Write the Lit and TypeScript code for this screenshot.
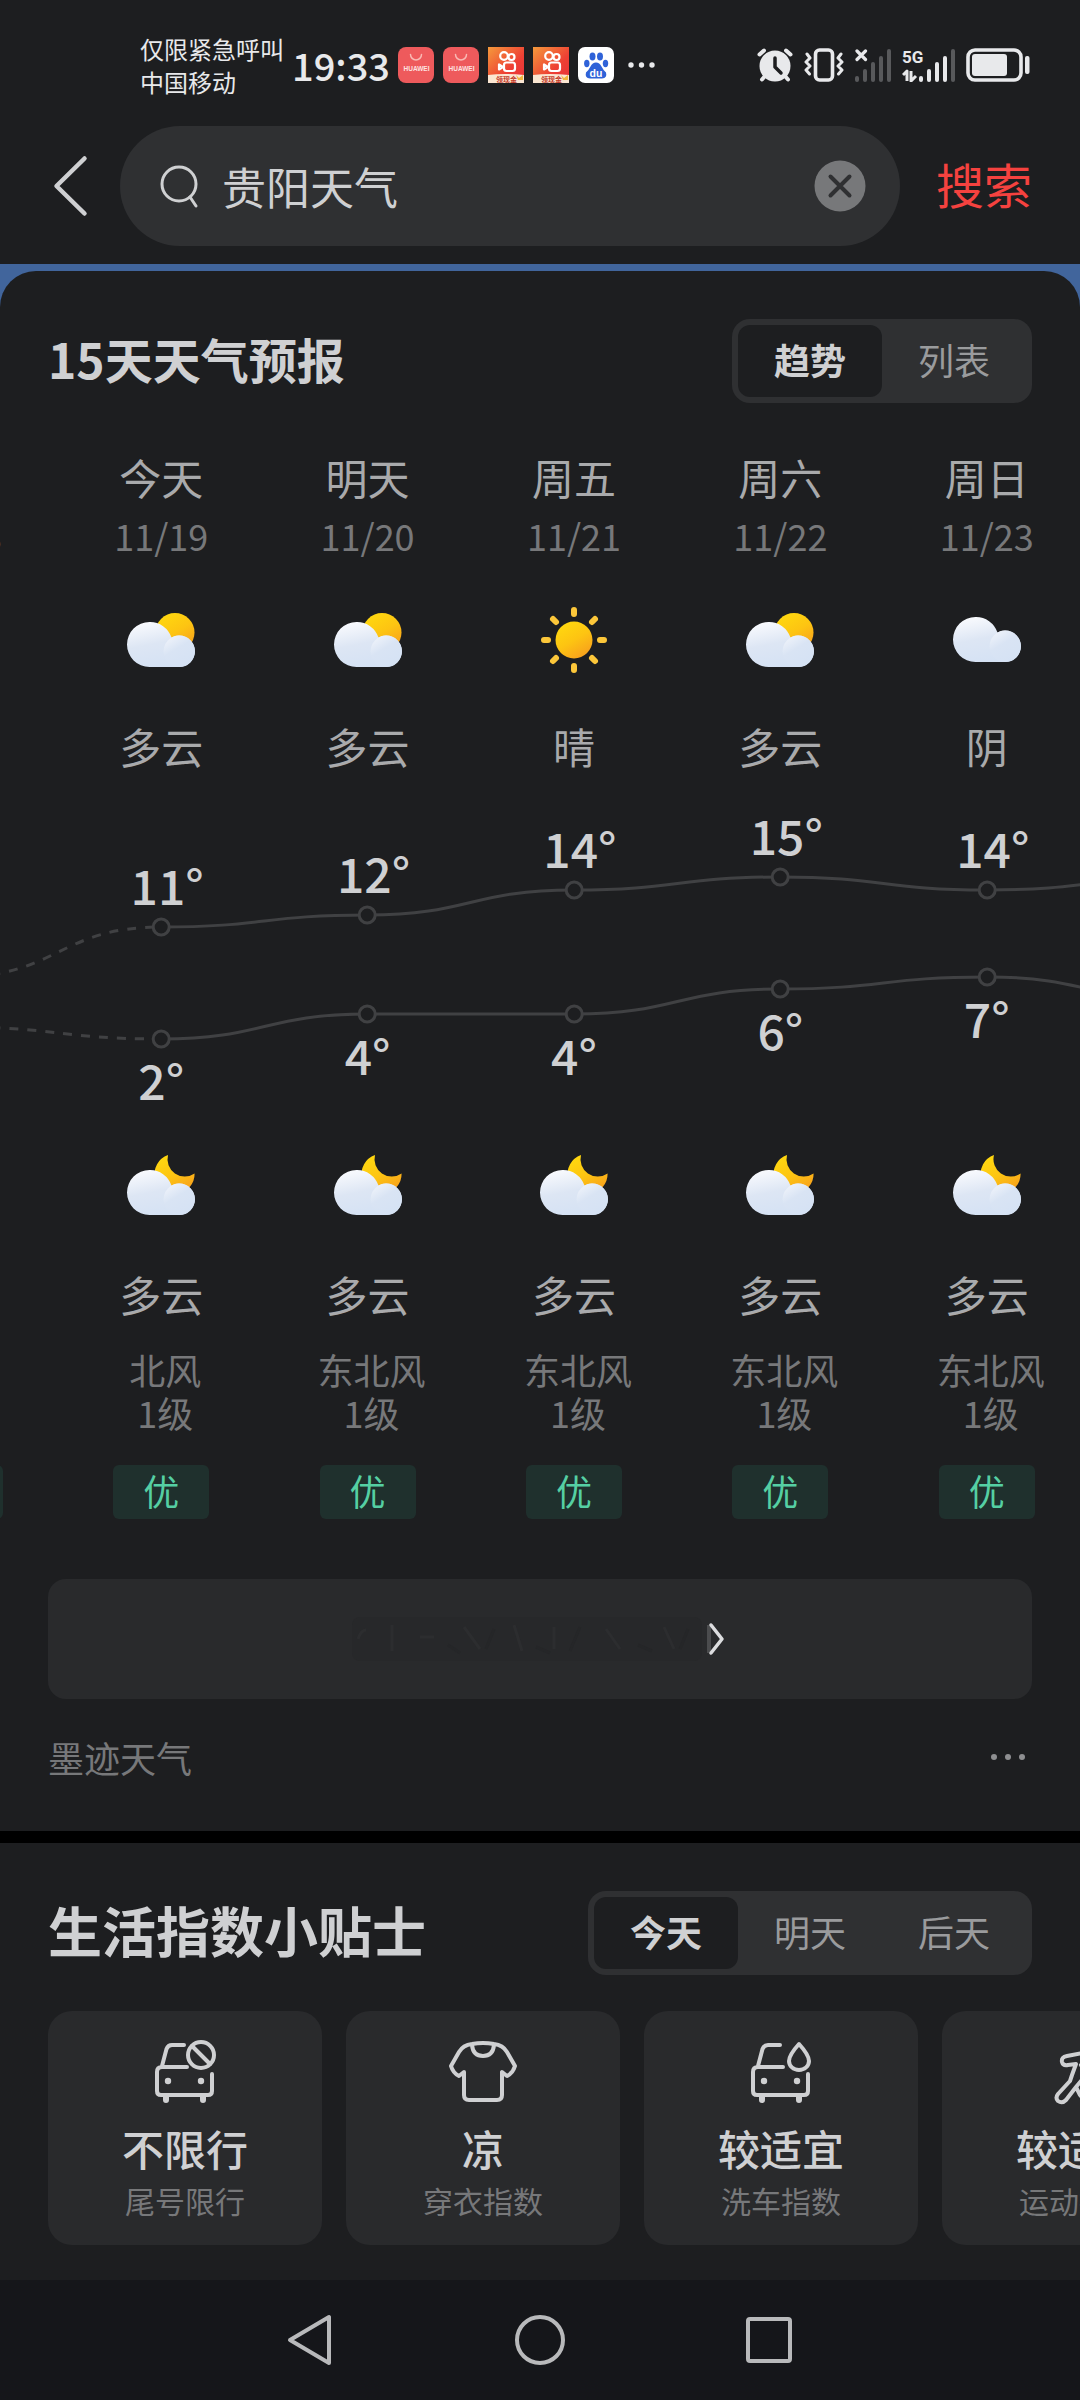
import { LitElement, html, svg, css, nothing } from "lit";
import { customElement, state } from "lit/decorators.js";
import { classMap } from "lit/directives/class-map.js";

type Sky = "partly" | "sunny" | "cloudy" | "night";

interface Day {
  name: string;
  date: string;
  sky?: Sky;
  text?: string;
  high: number;
  low: number;
  wind?: string;
  past?: boolean;
}

const DAYS: Day[] = [
  { name: "", date: "11/18", high: 7, low: 3, past: true },
  { name: "今天", date: "11/19", sky: "partly", text: "多云", high: 11, low: 2, wind: "北风" },
  { name: "明天", date: "11/20", sky: "partly", text: "多云", high: 12, low: 4, wind: "东北风" },
  { name: "周五", date: "11/21", sky: "sunny", text: "晴", high: 14, low: 4, wind: "东北风" },
  { name: "周六", date: "11/22", sky: "partly", text: "多云", high: 15, low: 6, wind: "东北风" },
  { name: "周日", date: "11/23", sky: "cloudy", text: "阴", high: 14, low: 7, wind: "东北风" },
];

/* Temperatures that the curves run towards after the last listed day. */
const AFTER = { high: 15, low: 5 };

const yOf = (t: number) => Math.round(288 - 12.44 * t);

const cloud = svg`
  <path fill="url(#cloud-big)" d="M24.5 18A22.500 22.500 0 0 0 24.500 63H54.300A15.700 15.700 0 1 0 46.500 33.600A22.500 22.500 0 0 0 24.500 18Z"/>
  <circle cx="54.300" cy="47.300" r="15.700" fill="url(#cloud-small)"/>`;

const SKY = {
  partly: svg`<circle cx="50" cy="28.500" r="19.500" fill="url(#sun)"/>${cloud}`,
  cloudy: svg`<g transform="translate(0 -5)">${cloud}</g>`,
  night: svg`<path fill="url(#sun)" d="M43 3A20 20 0 1 0 69.600 21.500A17.300 17.300 0 0 1 43 3Z"/>${cloud}`,
  sunny: svg`
    <circle cx="36" cy="36" r="18.500" fill="url(#sun)"/>
    <path fill="none" stroke="#fcc73a" stroke-width="6" stroke-linecap="round"
      d="M36 6v4M36 62v4M6 36h4M62 36h4M15 15l3 3M54 54l3 3M15 57l3-3M54 18l3-3"/>`,
};

const carBody = svg`
  <path d="M35 10H23Q19 10 17.500 14L13 31M38 32H13Q8 32 8 37V56Q8 60 12 60H59Q63 60 63 56V39"/>
  <path d="M17 61v4M54 61v4" stroke-width="6"/>
  <circle cx="19" cy="46" r="3.200" fill="currentColor" stroke="none"/>
  <circle cx="52" cy="46" r="3.200" fill="currentColor" stroke="none"/>`;

const TIPS = [
  {
    value: "不限行",
    label: "尾号限行",
    icon: svg`${carBody}<circle cx="52" cy="20" r="13"/><path d="M43 11l18 18"/>`,
  },
  {
    value: "凉",
    label: "穿衣指数",
    icon: svg`<path d="M25 9Q36 7 47 9Q56 10 60 17L68 31Q66 38 60 41L55 37V60Q55 65 50 65H22Q17 65 17 60V37L12 41Q6 38 4 31L12 17Q16 10 25 9Z"/><path d="M25 10Q26 21 36 21Q46 21 47 10"/>`,
  },
  {
    value: "较适宜",
    label: "洗车指数",
    icon: svg`${carBody}<path d="M54 9Q64 20 64 26A10 9 0 0 1 44 26Q44 20 54 9Z"/>`,
  },
  {
    value: "较适宜",
    label: "运动指数",
    icon: svg`<path d="M40 18L24 21Q18 22 19 27Q20 31 25 30L33 29L29 40L27 46L15 59Q12 63 15 66Q19 69 23 65L33 52L38 46M33 52L37 60L42 66M38 30L44 40L56 36"/><circle cx="48" cy="14" r="6"/>`,
  },
];

@customElement("app-root")
export class AppRoot extends LitElement {
  @state() private view = "趋势";
  @state() private tipDay = "今天";

  static styles = css`
    :host {
      display: block;
      background: #1d1e20;
      color: #cfd0d2;
      font-family: "Noto Sans CJK SC", sans-serif;
      font-size: 36px;
    }
    * { box-sizing: border-box; }
    h2, p, ul { margin: 0; padding: 0; }
    ul { list-style: none; }
    svg { display: block; flex: none; }
    button {
      border: 0;
      padding: 0;
      background: none;
      color: inherit;
      font: inherit;
    }
    .defs { position: absolute; }

    .status {
      display: flex;
      align-items: center;
      justify-content: space-between;
      padding: 32px 50px 28px 140px;
      color: #e8e9eb;
    }
    .status-left, .status-right { display: flex; align-items: center; }
    .carrier { font-size: 24px; line-height: 33px; white-space: nowrap; }
    .clock { margin: 0 8px; font-size: 38px; line-height: 60px; font-weight: 500; }
    .apps { display: flex; gap: 9px; }
    .apps-more { margin-left: 14px; }
    .status-right { gap: 11px; }

    .search { display: flex; align-items: center; padding: 0 48px 0 36px; margin-bottom: 18px; }
    .back { width: 84px; }
    .box {
      flex: 1;
      min-width: 0;
      display: flex;
      align-items: center;
      height: 120px;
      padding: 0 34px 0 40px;
      border-radius: 60px;
      background: #2f3032;
    }
    .query {
      flex: 1;
      min-width: 0;
      margin: 0 22px;
      padding: 0;
      border: 0;
      outline: 0;
      background: none;
      color: #cfd0d2;
      font: inherit;
      font-size: 44px;
      line-height: 60px;
    }
    .submit { margin-left: 36px; padding-bottom: 6px; color: #f5423f; font-size: 48px; line-height: 60px; }

    .sheet-back { background: #41659c; padding-top: 7px; }
    .sheet { background: #1d1e20; border-radius: 36px 36px 0 0; padding: 48px 0 44px; }
    .head { display: flex; align-items: center; justify-content: space-between; padding: 0 48px; }
    h2 { padding-bottom: 6px; font-size: 48px; line-height: 72px; font-weight: 700; white-space: nowrap; }
    .large { font-size: 54px; }
    .seg { display: flex; padding: 6px; border-radius: 18px; background: #2f3032; }
    .seg button {
      width: 144px;
      height: 72px;
      padding-bottom: 4px;
      border-radius: 12px;
      color: #9a9b9d;
      line-height: 54px;
    }
    .seg .on { background: #1d1e20; color: #cfd0d2; font-weight: 700; }

    .days { --col: calc((100% - 48px) / 5); display: flex; margin-top: 44px; overflow: hidden; }
    .day {
      flex: 0 0 var(--col);
      display: flex;
      flex-direction: column;
      align-items: center;
      text-align: center;
      color: #a9aaac;
    }
    .past { margin-left: calc(58px - var(--col)); }
    .name, .cond { min-height: 60px; font-size: 42px; line-height: 60px; }
    .date { color: #77787a; line-height: 56px; }
    .sky { width: 72px; height: 72px; margin: 41px 0 40px; }
    .night-sky { margin-top: 0; }
    .chart { position: relative; align-self: stretch; height: 376px; }
    .curve { width: 100%; height: 100%; overflow: visible; fill: none; stroke: #404143; stroke-width: 3; }
    .dot { fill: #1d1e20; }
    .temp {
      position: absolute;
      left: 0;
      right: 0;
      color: #cfd0d2;
      font-size: 48px;
      line-height: 48px;
      font-weight: 500;
    }
    .high { padding-left: 12px; }
    .wind { min-height: 86px; margin: 24px 0 31px; padding-left: 8px; color: #77787a; line-height: 43px; }
    .wind span { display: block; }
    .aqi {
      width: 96px;
      padding-bottom: 4px;
      border-radius: 6px;
      background: #1f302d;
      color: #55cfa3;
      line-height: 50px;
    }

    .more {
      display: flex;
      align-items: center;
      justify-content: center;
      width: calc(100% - 96px);
      height: 120px;
      margin: 60px 48px 28px;
      border-radius: 18px;
      background: #292a2c;
    }
    .source {
      display: flex;
      align-items: center;
      justify-content: space-between;
      padding: 0 54px 0 48px;
      color: #77787a;
      line-height: 60px;
    }

    .tips { border-top: 12px solid #000; padding: 48px 0 35px; }
    .cards { display: flex; gap: 24px; margin-top: 36px; padding-left: 48px; overflow: hidden; }
    .card {
      flex: 0 0 274px;
      display: flex;
      flex-direction: column;
      align-items: center;
      padding: 24px 0 25px;
      border-radius: 24px;
      background: #292a2c;
    }
    .card svg { fill: none; stroke: currentColor; stroke-width: 4; stroke-linecap: round; stroke-linejoin: round; }
    .value { margin: 13px 0 4px; font-size: 42px; line-height: 56px; font-weight: 500; white-space: nowrap; }
    .label { color: #77787a; font-size: 30px; line-height: 40px; white-space: nowrap; }

    .nav {
      display: flex;
      align-items: center;
      justify-content: center;
      gap: 170px;
      height: 120px;
      background: #15161a;
    }
  `;

  private segment(label: string, items: string[], current: string, pick: (v: string) => void) {
    return html`<div class="seg" role="group" aria-label=${label}>
      ${items.map(
        (v) => html`<button
          class=${classMap({ on: v === current })}
          aria-pressed=${v === current ? "true" : "false"}
          @click=${() => pick(v)}
        >${v}</button>`,
      )}
    </div>`;
  }

  private sky(kind: Sky | undefined, extra = "") {
    return html`<svg class="sky ${extra}" viewBox="0 0 72 72" aria-hidden="true">${kind ? SKY[kind] : nothing}</svg>`;
  }

  /* Each column draws its own points and the stretch of curve up to the next column. */
  private chart(d: Day, i: number) {
    const next = DAYS[i + 1] ?? AFTER;
    const line = (a: number, b: number) =>
      svg`<path stroke-dasharray=${d.past ? "9 9" : "none"} d="M103 ${yOf(a)}C206 ${yOf(a)} 206 ${yOf(b)} 309 ${yOf(b)}"/>`;
    return html`<div class="chart">
      <svg class="curve" viewBox="0 0 206 376" preserveAspectRatio="none" aria-hidden="true">
        ${line(d.high, next.high)}${line(d.low, next.low)}
        <circle class="dot" cx="103" cy=${yOf(d.high)} r="8"/>
        <circle class="dot" cx="103" cy=${yOf(d.low)} r="8"/>
      </svg>
      ${d.past
        ? nothing
        : html`<span class="temp high" style="top:${yOf(d.high) - 67}px">${d.high}°</span>
            <span class="temp" style="top:${yOf(d.low) + 16}px">${d.low}°</span>`}
    </div>`;
  }

  private day(d: Day, i: number) {
    return html`<li class=${classMap({ day: true, past: !!d.past })}>
      <p class="name">${d.name}</p>
      <p class="date">${d.date}</p>
      ${this.sky(d.sky)}
      <p class="cond">${d.text}</p>
      ${this.chart(d, i)}
      ${this.sky(d.past ? undefined : "night", "night-sky")}
      <p class="cond">${d.past ? nothing : "多云"}</p>
      <p class="wind">${d.wind ? html`<span>${d.wind}</span><span>1级</span>` : nothing}</p>
      <p class="aqi">优</p>
    </li>`;
  }

  private huawei() {
    return html`<svg width="36" height="36" viewBox="0 0 36 36" aria-hidden="true">
      <rect width="36" height="36" rx="8" fill="#ee5a5c"/>
      <path d="M12.500 7.500a5.500 5.500 0 0 0 11 0" fill="none" stroke="#f9b9b4" stroke-width="1.500" stroke-linecap="round"/>
      <text x="18.500" y="23.500" text-anchor="middle" font-family="Liberation Sans" font-weight="700" font-size="6.500" fill="#fde3e0">HUAWEI</text>
    </svg>`;
  }

  private kuaishou() {
    return html`<svg width="36" height="36" viewBox="0 0 36 36" aria-hidden="true">
      <rect width="36" height="36" fill="url(#ks)"/>
      <g fill="none" stroke="#fff" stroke-width="2.200" stroke-linejoin="round">
        <circle cx="16" cy="9" r="3.800"/><circle cx="23.500" cy="10" r="3"/>
        <rect x="16" y="15.500" width="11" height="8.500" rx="2.500"/>
        <path d="M11 17.500v5l4-2.500z"/>
      </g>
      <path d="M0 28q16-2 36 0v8H0z" fill="#fbe6d2"/>
      <path d="M28 28l3 3 4-3v5h-5z" fill="#f2b53c"/>
      <text x="18.500" y="35" text-anchor="middle" font-family="Noto Sans CJK SC" font-weight="700" font-size="7" fill="#c33a2a">领现金</text>
    </svg>`;
  }

  private statusBar() {
    const bars = (lit: number) =>
      [0, 1, 2, 3, 4].map((n) => {
        const h = [6, 13, 20, 26, 33][n];
        return svg`<rect x=${n * 8} y=${33 - h} width="4" height=${h} rx="2" fill=${n < lit ? "#e8e9eb" : "#58595b"}/>`;
      });
    return html`<header class="status">
      <div class="status-left">
        <div class="carrier">仅限紧急呼叫<br />中国移动</div>
        <div class="clock">19:33</div>
        <div class="apps">
          ${this.huawei()}${this.huawei()}${this.kuaishou()}${this.kuaishou()}
          <svg width="36" height="36" viewBox="0 0 36 36" aria-hidden="true">
            <rect width="36" height="36" rx="7" fill="#fff"/>
            <g fill="#2f62d8">
              <ellipse cx="14.500" cy="9.500" rx="3" ry="4"/><ellipse cx="22" cy="9.500" rx="3" ry="4"/>
              <ellipse cx="8.800" cy="16.500" rx="2.700" ry="3.700"/><ellipse cx="27.500" cy="16.500" rx="2.700" ry="3.700"/>
              <path d="M18 15.500q3.500 0 5.500 4t4.500 6q1.500 5.500-4 6h-12q-5.500-.5-4-6 2.500-2 4.500-6t5.500-4z"/>
            </g>
            <text x="18" y="30" text-anchor="middle" font-family="Liberation Sans" font-weight="700" font-size="10.500" fill="#fff">du</text>
          </svg>
        </div>
        <svg class="apps-more" width="27" height="6" viewBox="0 0 27 6" fill="#e8e9eb" aria-hidden="true">
          <circle cx="3" cy="3" r="2.700"/><circle cx="13.500" cy="3" r="2.700"/><circle cx="24" cy="3" r="2.700"/>
        </svg>
      </div>
      <div class="status-right">
        <svg width="36" height="34" viewBox="0 0 36 34" aria-hidden="true">
          <g stroke="#e8e9eb" stroke-width="4" stroke-linecap="round" fill="none">
            <path d="M2.500 6.500L7 2.500M33.500 6.500L29 2.500M8 28l-3 3.500M28 28l3 3.500"/>
          </g>
          <circle cx="18" cy="18" r="15.500" fill="#e8e9eb"/>
          <path d="M18 10v9l6 6" fill="none" stroke="#1d1e20" stroke-width="3.500" stroke-linecap="round" stroke-linejoin="round"/>
        </svg>
        <svg width="40" height="34" viewBox="0 0 40 34" fill="none" stroke="#e8e9eb" stroke-linecap="round" stroke-linejoin="round" aria-hidden="true">
          <rect x="11.500" y="2" width="17" height="30" rx="4" stroke-width="3.600"/>
          <path d="M3 6l3 4-4 4 4 4-4 4 3.500 4M37 6l-3 4 4 4-4 4 4 4-3.500 4" stroke-width="3"/>
        </svg>
        <svg width="36" height="33" viewBox="0 0 36 33" aria-hidden="true">
          ${bars(0)}
          <path d="M2 2l8.500 8.500M10.500 2L2 10.500" stroke="#e8e9eb" stroke-width="3.200" stroke-linecap="round"/>
        </svg>
        <svg width="53" height="33" viewBox="0 0 53 33" aria-hidden="true">
          <g transform="translate(17)">${bars(4)}</g>
          <text x="0" y="14" font-family="Roboto" font-weight="700" font-size="17" fill="#e8e9eb">5G</text>
          <path d="M1 26l4-4v10M9 22v10l5-5" fill="none" stroke="#e8e9eb" stroke-width="3" stroke-linejoin="round"/>
        </svg>
        <svg width="64" height="34" viewBox="0 0 64 34" aria-hidden="true">
          <rect x="2" y="2" width="53" height="30" rx="7" fill="none" stroke="#e8e9eb" stroke-width="3.600"/>
          <rect x="6" y="6" width="35" height="22" rx="3" fill="#e8e9eb"/>
          <rect x="59" y="8" width="4.500" height="18" rx="2" fill="#e8e9eb"/>
        </svg>
      </div>
    </header>`;
  }

  render() {
    return html`
      <svg class="defs" width="0" height="0" aria-hidden="true">
        <defs>
          <linearGradient id="sun" x1="0.2" y1="0" x2="0.8" y2="1">
            <stop offset="0" stop-color="#ffd90f"/><stop offset="0.5" stop-color="#fdc412"/><stop offset="1" stop-color="#f79c1e"/>
          </linearGradient>
          <linearGradient id="cloud-big" x1="0.2" y1="0" x2="0.5" y2="1">
            <stop offset="0" stop-color="#fafbfe"/><stop offset="0.5" stop-color="#dde6f4"/><stop offset="1" stop-color="#d5e2f4"/>
          </linearGradient>
          <linearGradient id="cloud-small" x1="0.1" y1="0" x2="0.7" y2="1">
            <stop offset="0" stop-color="#f2f5fb"/><stop offset="0.45" stop-color="#d9e4f4"/><stop offset="1" stop-color="#d5e2f4"/>
          </linearGradient>
          <linearGradient id="ks" x1="0" y1="0" x2="1" y2="1">
            <stop offset="0" stop-color="#f59a3c"/><stop offset="0.6" stop-color="#ee4034"/><stop offset="1" stop-color="#e8303a"/>
          </linearGradient>
        </defs>
      </svg>
      ${this.statusBar()}
      <form class="search" role="search" @submit=${(e: Event) => e.preventDefault()}>
        <button class="back" type="button" aria-label="返回">
          <svg width="60" height="66" viewBox="0 0 60 66" fill="none" stroke="#cfd0d2" stroke-width="4.500" stroke-linecap="round" stroke-linejoin="round">
            <path d="M48.500 5.500L20.500 33L48.500 60.500"/>
          </svg>
        </button>
        <div class="box">
          <svg width="40" height="44" viewBox="0 0 40 44" fill="none" stroke="#cfd0d2" stroke-width="3" stroke-linecap="round" aria-hidden="true">
            <circle cx="19" cy="20" r="17"/><path d="M30 33l6 9"/>
          </svg>
          <input class="query" type="text" aria-label="搜索" value="贵阳天气" />
          <button type="button" aria-label="清除">
            <svg width="52" height="52" viewBox="0 0 52 52">
              <circle cx="26" cy="26" r="25.500" fill="#77787a"/>
              <path d="M16.500 16.500l19 19M35.500 16.500l-19 19" stroke="#2f3032" stroke-width="4" stroke-linecap="round"/>
            </svg>
          </button>
        </div>
        <button class="submit" type="submit">搜索</button>
      </form>

      <div class="sheet-back">
        <section class="sheet">
          <div class="head">
            <h2>15天天气预报</h2>
            ${this.segment("预报视图", ["趋势", "列表"], this.view, (v) => (this.view = v))}
          </div>
          <ul class="days">${DAYS.map((d, i) => this.day(d, i))}</ul>
          <button class="more" aria-label="更多">
            <svg width="392" height="48" viewBox="0 0 392 48" fill="none">
              <rect x="8" y="2" width="350" height="44" rx="8" fill="#27282a"/>
              <path d="M14 24q3-9 8-9M48 10v26M76 22h14M120 12l16 22M170 10l8 26M210 12v22M262 14l14 20M320 12l10 22" stroke="#2c2d2f" stroke-width="3"/>
              <path d="M104 30l12 8M150 14l-8 20M192 32l14 6M236 12l-10 24M294 30l14 6M344 14l-8 20" stroke="#252628" stroke-width="3"/>
              <path d="M365 10v28" stroke="#4b4c4e" stroke-width="4"/>
              <path d="M367 10l11 14-11 14" stroke="#dcdddf" stroke-width="3.500" stroke-linecap="round" stroke-linejoin="round"/>
            </svg>
          </button>
          <div class="source">
            <span>墨迹天气</span>
            <button aria-label="更多选项">
              <svg width="36" height="8" viewBox="0 0 36 8" fill="#8e8f91">
                <circle cx="4" cy="4" r="3"/><circle cx="18" cy="4" r="3"/><circle cx="32" cy="4" r="3"/>
              </svg>
            </button>
          </div>
        </section>
      </div>

      <section class="tips">
        <div class="head">
          <h2 class="large">生活指数小贴士</h2>
          ${this.segment("日期", ["今天", "明天", "后天"], this.tipDay, (v) => (this.tipDay = v))}
        </div>
        <ul class="cards">
          ${TIPS.map(
            (t) => html`<li class="card">
              <svg width="72" height="72" viewBox="0 0 72 72" aria-hidden="true">${t.icon}</svg>
              <p class="value">${t.value}</p>
              <p class="label">${t.label}</p>
            </li>`,
          )}
        </ul>
      </section>

      <nav class="nav">
        <button aria-label="后退">
          <svg width="60" height="60" viewBox="0 0 60 60" fill="none" stroke="#b8b9bb" stroke-width="4" stroke-linejoin="round"><path d="M49 7v46L10 30z"/></svg>
        </button>
        <button aria-label="主页">
          <svg width="60" height="60" viewBox="0 0 60 60" fill="none" stroke="#b8b9bb" stroke-width="4"><circle cx="30" cy="30" r="23"/></svg>
        </button>
        <button aria-label="最近任务">
          <svg width="60" height="60" viewBox="0 0 60 60" fill="none" stroke="#b8b9bb" stroke-width="4"><rect x="8" y="9" width="42" height="42" rx="2"/></svg>
        </button>
      </nav>
    `;
  }
}
